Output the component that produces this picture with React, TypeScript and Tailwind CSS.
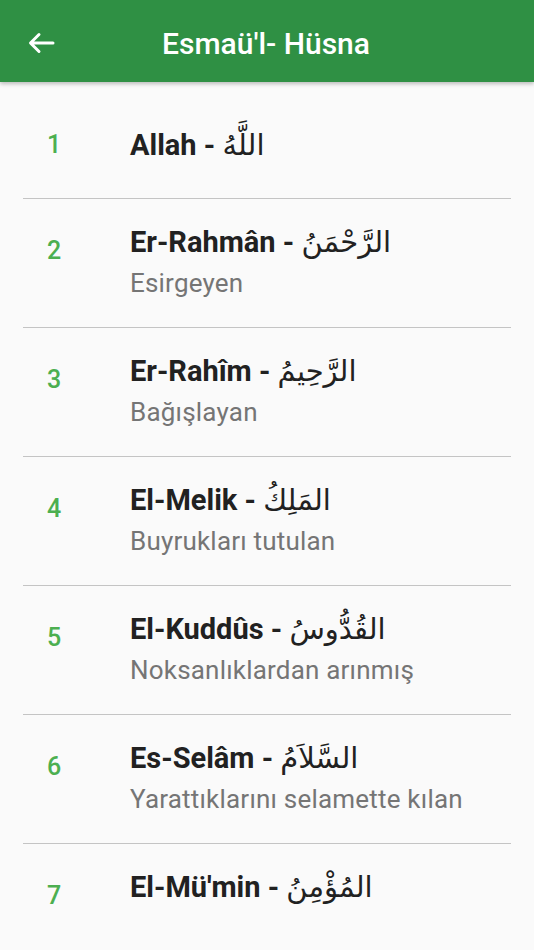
import React from "react";

type Name = {
  no: number;
  name: string;
  arabic: string;
  meaning?: string;
};

const names: Name[] = [
  { no: 1, name: "Allah", arabic: "اللَّهُ" },
  { no: 2, name: "Er-Rahmân", arabic: "الرَّحْمَنُ", meaning: "Esirgeyen" },
  { no: 3, name: "Er-Rahîm", arabic: "الرَّحِيمُ", meaning: "Bağışlayan" },
  { no: 4, name: "El-Melik", arabic: "المَلِكُ", meaning: "Buyrukları tutulan" },
  { no: 5, name: "El-Kuddûs", arabic: "القُدُّوسُ", meaning: "Noksanlıklardan arınmış" },
  { no: 6, name: "Es-Selâm", arabic: "السَّلاَمُ", meaning: "Yarattıklarını selamette kılan" },
  { no: 7, name: "El-Mü'min", arabic: "المُؤْمِنُ", meaning: "" },
];

function BackArrow() {
  return (
    <svg width="28" height="24" viewBox="0 0 28 24" fill="none">
      <path
        d="M26 12H4M12 3.5L3.5 12L12 20.5"
        stroke="white"
        strokeWidth="3"
        strokeLinecap="round"
        strokeLinejoin="round"
      />
    </svg>
  );
}

function NameRow({ item }: { item: Name }) {
  // rows without a meaning line sit centred, others are top-aligned
  const single = item.meaning === undefined;
  return (
    <div
      className={
        single
          ? "flex h-[117px] border-b border-[#c4c4c4] pt-[45px]"
          : "flex h-[129px] border-b border-[#c4c4c4] pt-[25px]"
      }
    >
      <div
        className={
          single
            ? "w-[107px] pl-[24px] text-[25px] leading-[36px] font-medium text-[#4caf50]"
            : "w-[107px] pl-[24px] pt-[9px] text-[25px] leading-[36px] font-medium text-[#4caf50]"
        }
      >
        {item.no}
      </div>
      <div className="flex-1">
        <div className="text-[29px] leading-[36px] font-bold text-[#212121] whitespace-nowrap">
          {item.name} - <span className="font-normal">{item.arabic}</span>
        </div>
        {item.meaning && (
          <div className="mt-[5px] text-[26px] tracking-[0.2px] leading-[36px] text-[#757575] whitespace-nowrap">
            {item.meaning}
          </div>
        )}
      </div>
    </div>
  );
}

export default function App() {
  return (
    <div
      className="w-[534px] h-[950px] bg-[#fafafa] overflow-hidden"
      style={{ fontFamily: "Roboto, 'DejaVu Sans', sans-serif" }}
    >
      <div className="relative z-10 h-[82px] bg-[#2f9044] flex items-center pt-[4px] shadow-[0_2px_4px_rgba(0,0,0,0.25)]">
        <div className="pl-[27px] w-[162px]">
          <BackArrow />
        </div>
        <h1 className="text-[30px] font-medium text-white">Esmaü'l- Hüsna</h1>
      </div>

      <div className="px-[23px]">
        {names.map((n) => (
          <NameRow key={n.no} item={n} />
        ))}
      </div>
    </div>
  );
}
